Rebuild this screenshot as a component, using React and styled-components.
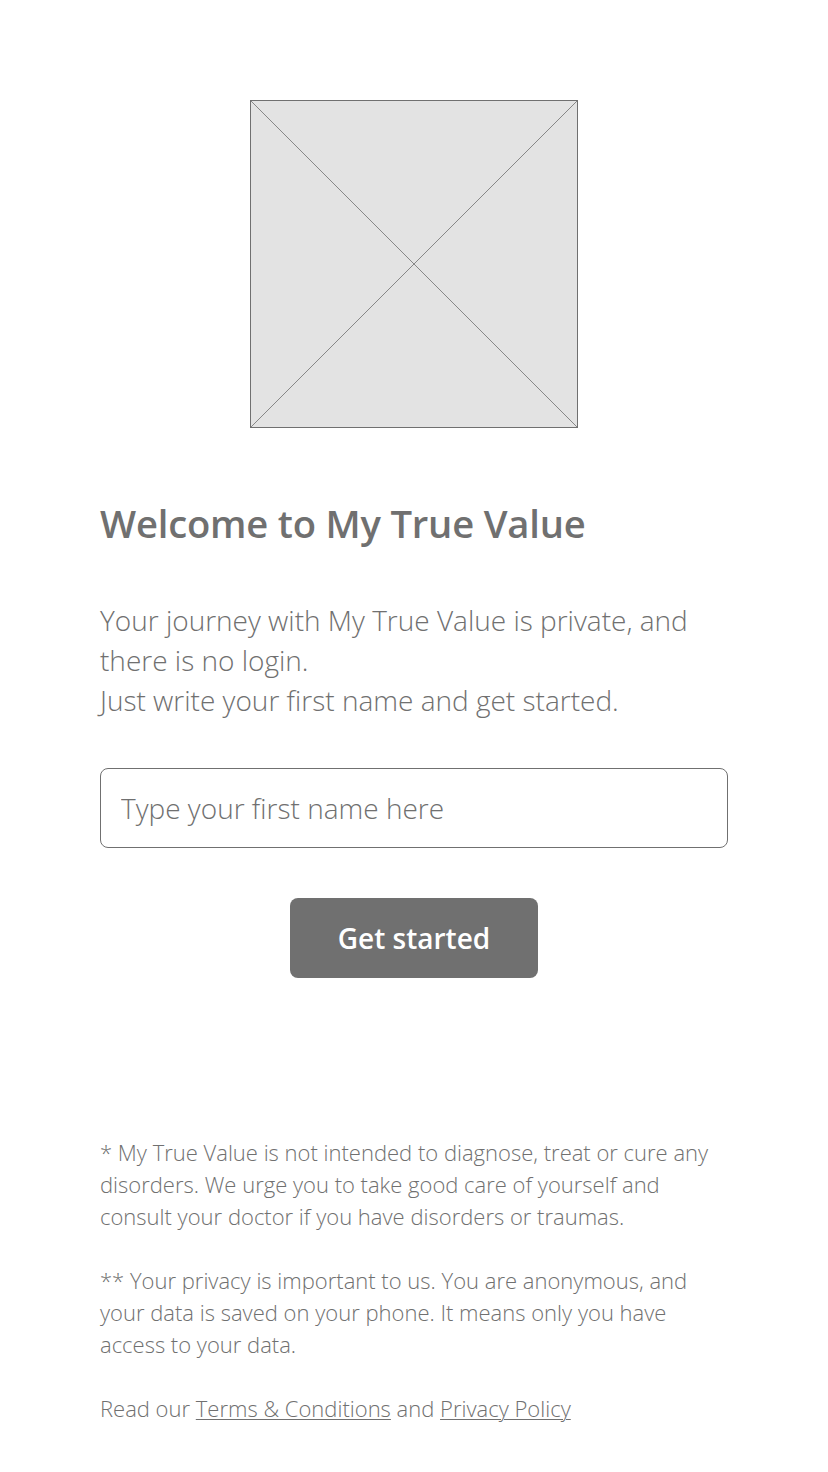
import React from "react";
import styled, { createGlobalStyle } from "styled-components";

const grey = "#707070";

const GlobalStyle = createGlobalStyle`
  html, body {
    margin: 0;
    padding: 0;
    background: #ffffff;
  }
  body {
    font-family: "Open Sans", "Noto Sans", "Liberation Sans", sans-serif;
    color: ${grey};
  }
`;

const Page = styled.div`
  width: 828px;
  min-height: 1472px;
  box-sizing: border-box;
  padding: 100px 100px 0;
  display: flex;
  flex-direction: column;
`;

const Placeholder = styled.div`
  align-self: center;
  width: 328px;
  height: 328px;
  box-sizing: border-box;
  border: 1px solid ${grey};
  background: #e3e3e3;

  svg {
    display: block;
    width: 100%;
    height: 100%;
  }
`;

const Heading = styled.h1`
  margin: 71px 0 0;
  font-size: 38.2px;
  line-height: 48px;
  font-weight: 600;
  color: ${grey};
  letter-spacing: -0.2px;
`;

const Intro = styled.p`
  margin: 53px 0 0;
  font-size: 28px;
  line-height: 40px;
  font-weight: 300;
`;

const NameInput = styled.input`
  margin-top: 48px;
  height: 80px;
  box-sizing: border-box;
  border: 1px solid ${grey};
  border-radius: 8px;
  padding: 0 20px;
  font-family: inherit;
  font-size: 28px;
  font-weight: 300;
  color: ${grey};
  outline: none;

  &::placeholder {
    color: ${grey};
    opacity: 1;
  }
`;

const StartButton = styled.button`
  align-self: center;
  margin-top: 50px;
  width: 248px;
  height: 80px;
  border: none;
  border-radius: 8px;
  background: ${grey};
  color: #ffffff;
  font-family: inherit;
  font-size: 28px;
  font-weight: 600;
  cursor: pointer;
`;

const Footer = styled.div`
  margin-top: 158px;
  font-size: 22px;
  line-height: 32px;
  font-weight: 300;
`;

const Note = styled.p`
  margin: 0 0 32px;
`;

const Link = styled.a`
  color: ${grey};
  text-decoration: underline;
  text-underline-offset: 2px;
  text-decoration-thickness: 1px;
`;

const App = function () {
  return (
    <>
      <GlobalStyle />
      <Page>
        <Placeholder>
          <svg viewBox="0 0 326 326" preserveAspectRatio="none">
            <line x1="0" y1="0" x2="326" y2="326" stroke={grey} strokeWidth="0.8" />
            <line x1="326" y1="0" x2="0" y2="326" stroke={grey} strokeWidth="0.8" />
          </svg>
        </Placeholder>
        <Heading>Welcome to My True Value</Heading>
        <Intro>
          Your journey with My True Value is private, and there is no login.
          <br />
          Just write your first name and get started.
        </Intro>
        <NameInput type="text" placeholder="Type your first name here" />
        <StartButton>Get started</StartButton>
        <Footer>
          <Note>
            * My True Value is not intended to diagnose, treat or cure any disorders. We urge you
            to take good care of yourself and consult your doctor if you have disorders or traumas.
          </Note>
          <Note>
            ** Your privacy is important to us. You are anonymous, and your data is saved on your
            phone. It means only you have access to your data.
          </Note>
          <Note>
            Read our <Link href="#">Terms &amp; Conditions</Link> and{" "}
            <Link href="#">Privacy Policy</Link>
          </Note>
        </Footer>
      </Page>
    </>
  );
};

export default App;
